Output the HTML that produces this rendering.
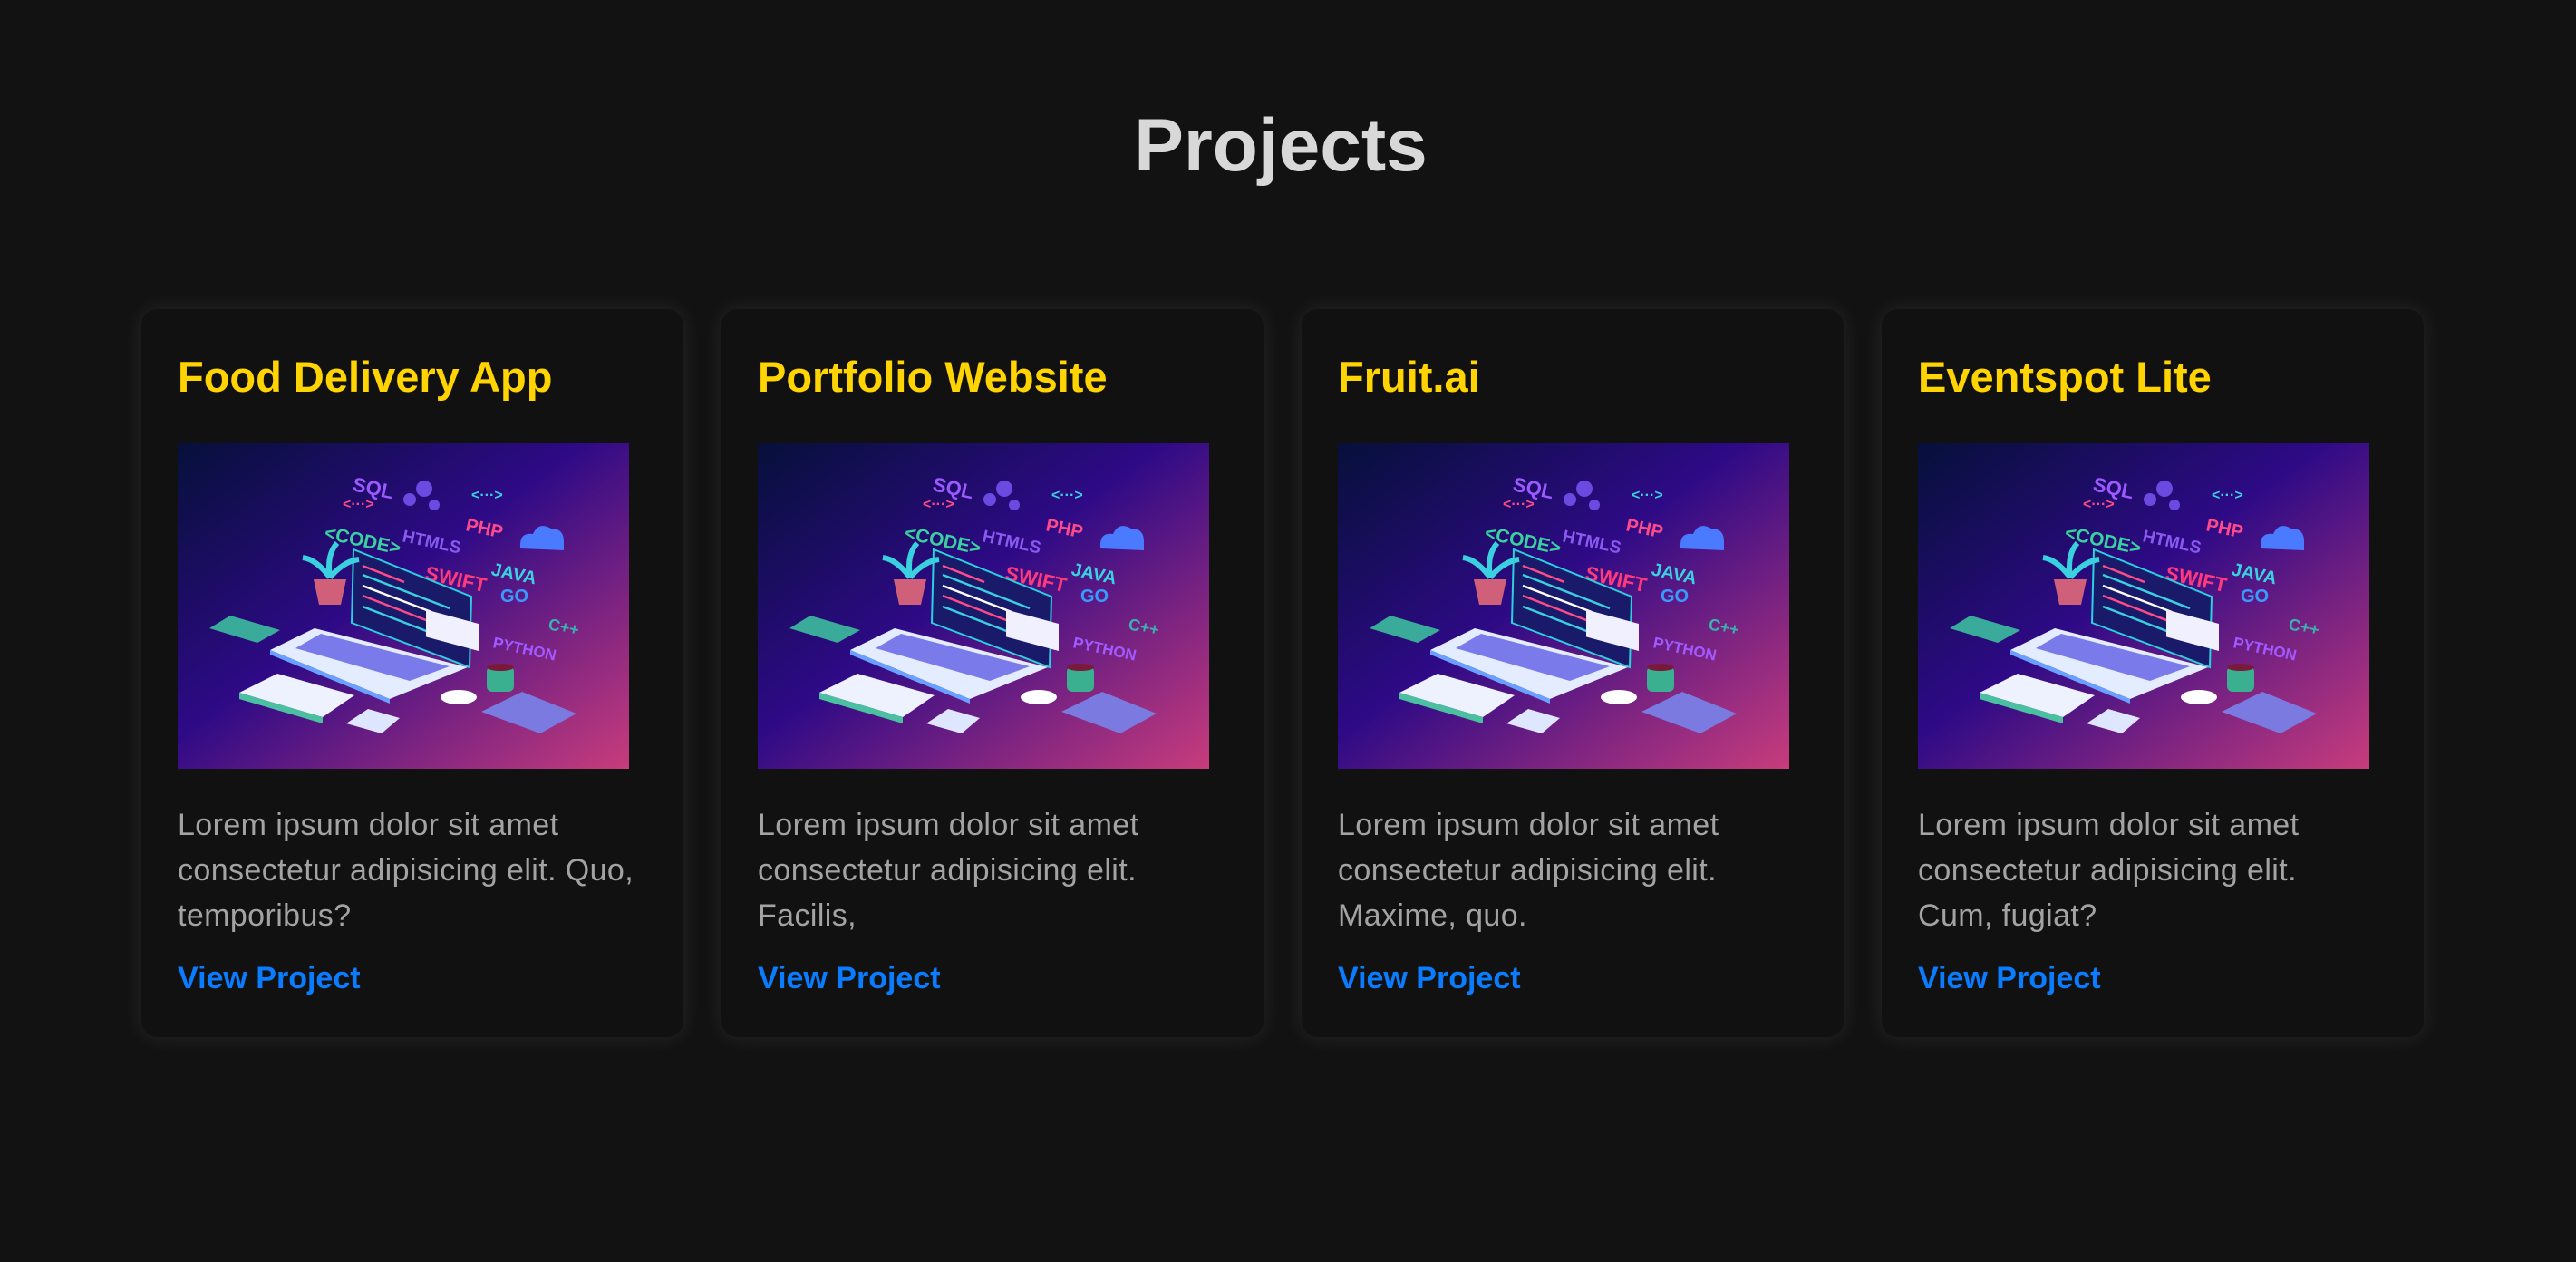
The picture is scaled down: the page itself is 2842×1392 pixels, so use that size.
<!DOCTYPE html>
<html><head><meta charset="utf-8"><style>
*{margin:0;padding:0;box-sizing:border-box}
html,body{width:2842px;height:1392px;background:#121212;overflow:hidden;font-family:"Liberation Sans",sans-serif}
h1{position:absolute;top:120px;left:-8px;width:2842px;text-align:center;font-size:82px;line-height:82px;color:#d8d8d8;font-weight:bold}
.card{position:absolute;top:341px;width:598px;height:803px;background:#111;border-radius:18px;box-shadow:0 0 24px rgba(255,255,255,0.09)}
.t{position:absolute;left:40px;top:48px;font-size:47px;line-height:54px;color:#ffd400;font-weight:bold;white-space:nowrap}
.img{position:absolute;left:40px;top:148px;width:498px;height:359px}
.p{position:absolute;left:40px;top:544px;font-size:34px;line-height:50px;color:#a3a3a3;white-space:nowrap;letter-spacing:0.4px}
.v{position:absolute;left:40px;top:717px;font-size:34px;line-height:42px;color:#0a7cff;font-weight:bold;white-space:nowrap}
</style></head><body>
<h1>Projects</h1>

<div class="card" style="left:156px">
<div class="t">Food Delivery App</div>
<svg class="img" viewBox="0 0 498 359"><defs><linearGradient id="g1" x1="0" y1="0" x2="1" y2="1"><stop offset="0" stop-color="#06103a"/><stop offset="0.45" stop-color="#2e0a86"/><stop offset="1" stop-color="#c83c7c"/></linearGradient></defs>
<rect width="498" height="359" fill="url(#g1)"/>
<g font-family="Liberation Sans" font-weight="bold">
<text x="192" y="52" font-size="22" fill="#9a5aff" transform="rotate(12 192 52)">SQL</text>
<text x="182" y="72" font-size="16" fill="#ff4a8a">&lt;···&gt;</text>
<text x="161" y="105" font-size="21" fill="#3ad0a0" transform="rotate(12 161 105)">&lt;CODE&gt;</text>
<text x="247" y="108" font-size="19" fill="#8a5af0" transform="rotate(12 247 108)">HTMLS</text>
<text x="317" y="96" font-size="20" fill="#ff4a8a" transform="rotate(12 317 96)">PHP</text>
<text x="324" y="62" font-size="16" fill="#3ad0e0">&lt;···&gt;</text>
<text x="272" y="150" font-size="22" fill="#ff3a7a" transform="rotate(12 272 150)">SWIFT</text>
<text x="345" y="145" font-size="20" fill="#3ad0e0" transform="rotate(12 345 145)">JAVA</text>
<text x="356" y="175" font-size="20" fill="#3a9aff">GO</text>
<text x="408" y="205" font-size="18" fill="#3ab0b0" transform="rotate(12 408 205)">C++</text>
<text x="347" y="225" font-size="17" fill="#a05aff" transform="rotate(12 347 225)">PYTHON</text>
</g>
<circle cx="272" cy="50" r="9" fill="#6a4ae0"/><circle cx="256" cy="62" r="7" fill="#6a4ae0"/><circle cx="283" cy="68" r="6" fill="#6a4ae0"/>
<path d="M378 112 q0-14 14-12 q6-14 20-6 q14 0 14 14 l0 10 l-48-2z" fill="#4a7aff"/>
<polygon points="194,117 324,169 322,247 192,198" fill="#1a1a6a" stroke="#2ad0e0" stroke-width="2"/>
<g stroke-width="2.5"><line x1="204" y1="135" x2="250" y2="153" stroke="#ff4a8a"/><line x1="204" y1="145" x2="300" y2="182" stroke="#3ad0e0"/><line x1="204" y1="157" x2="280" y2="186" stroke="#fff"/><line x1="204" y1="168" x2="300" y2="205" stroke="#ff4a8a"/><line x1="204" y1="180" x2="290" y2="213" stroke="#3ad0e0"/></g>
<polygon points="151,204 320,247 234,282 102,228" fill="#e4ecff"/>
<polygon points="158,210 300,246 256,262 130,226" fill="#7a7aea"/>
<polygon points="102,228 234,282 234,287 102,233" fill="#6aa0ff"/>
<rect x="274" y="185" width="58" height="30" fill="#f0f0ff" transform="skewY(15) translate(0,-75)"/>
<path d="M168 148 q-4-25 8-38 M168 148 q-15-20-30-22 M168 148 q15-18 32-20" stroke="#3ad0e0" stroke-width="6" fill="none"/>
<polygon points="150,150 186,150 180,178 156,178" fill="#d0607a"/>
<polygon points="58,190 113,206 88,220 35,204" fill="#3aaa9a"/>
<polygon points="110,254 195,278 160,302 68,275" fill="#eef2ff"/><polygon points="68,275 160,302 160,309 68,282" fill="#4ac0a0"/>
<polygon points="210,293 245,303 225,320 186,309" fill="#dfe6ff"/>
<ellipse cx="310" cy="280" rx="20" ry="8" fill="#fff"/>
<rect x="341" y="246" width="30" height="28" rx="6" fill="#3ab090"/><ellipse cx="356" cy="247" rx="15" ry="4" fill="#7a1a3a"/>
<polygon points="380,274 440,298 400,320 335,296" fill="#7a7ae0"/>
</svg>
<div class="p">Lorem ipsum dolor sit amet<br>consectetur adipisicing elit. Quo,<br>temporibus?</div>
<div class="v">View Project</div>
</div>

<div class="card" style="left:796px">
<div class="t">Portfolio Website</div>
<svg class="img" viewBox="0 0 498 359"><defs><linearGradient id="g2" x1="0" y1="0" x2="1" y2="1"><stop offset="0" stop-color="#06103a"/><stop offset="0.45" stop-color="#2e0a86"/><stop offset="1" stop-color="#c83c7c"/></linearGradient></defs>
<rect width="498" height="359" fill="url(#g2)"/>
<g font-family="Liberation Sans" font-weight="bold">
<text x="192" y="52" font-size="22" fill="#9a5aff" transform="rotate(12 192 52)">SQL</text>
<text x="182" y="72" font-size="16" fill="#ff4a8a">&lt;···&gt;</text>
<text x="161" y="105" font-size="21" fill="#3ad0a0" transform="rotate(12 161 105)">&lt;CODE&gt;</text>
<text x="247" y="108" font-size="19" fill="#8a5af0" transform="rotate(12 247 108)">HTMLS</text>
<text x="317" y="96" font-size="20" fill="#ff4a8a" transform="rotate(12 317 96)">PHP</text>
<text x="324" y="62" font-size="16" fill="#3ad0e0">&lt;···&gt;</text>
<text x="272" y="150" font-size="22" fill="#ff3a7a" transform="rotate(12 272 150)">SWIFT</text>
<text x="345" y="145" font-size="20" fill="#3ad0e0" transform="rotate(12 345 145)">JAVA</text>
<text x="356" y="175" font-size="20" fill="#3a9aff">GO</text>
<text x="408" y="205" font-size="18" fill="#3ab0b0" transform="rotate(12 408 205)">C++</text>
<text x="347" y="225" font-size="17" fill="#a05aff" transform="rotate(12 347 225)">PYTHON</text>
</g>
<circle cx="272" cy="50" r="9" fill="#6a4ae0"/><circle cx="256" cy="62" r="7" fill="#6a4ae0"/><circle cx="283" cy="68" r="6" fill="#6a4ae0"/>
<path d="M378 112 q0-14 14-12 q6-14 20-6 q14 0 14 14 l0 10 l-48-2z" fill="#4a7aff"/>
<polygon points="194,117 324,169 322,247 192,198" fill="#1a1a6a" stroke="#2ad0e0" stroke-width="2"/>
<g stroke-width="2.5"><line x1="204" y1="135" x2="250" y2="153" stroke="#ff4a8a"/><line x1="204" y1="145" x2="300" y2="182" stroke="#3ad0e0"/><line x1="204" y1="157" x2="280" y2="186" stroke="#fff"/><line x1="204" y1="168" x2="300" y2="205" stroke="#ff4a8a"/><line x1="204" y1="180" x2="290" y2="213" stroke="#3ad0e0"/></g>
<polygon points="151,204 320,247 234,282 102,228" fill="#e4ecff"/>
<polygon points="158,210 300,246 256,262 130,226" fill="#7a7aea"/>
<polygon points="102,228 234,282 234,287 102,233" fill="#6aa0ff"/>
<rect x="274" y="185" width="58" height="30" fill="#f0f0ff" transform="skewY(15) translate(0,-75)"/>
<path d="M168 148 q-4-25 8-38 M168 148 q-15-20-30-22 M168 148 q15-18 32-20" stroke="#3ad0e0" stroke-width="6" fill="none"/>
<polygon points="150,150 186,150 180,178 156,178" fill="#d0607a"/>
<polygon points="58,190 113,206 88,220 35,204" fill="#3aaa9a"/>
<polygon points="110,254 195,278 160,302 68,275" fill="#eef2ff"/><polygon points="68,275 160,302 160,309 68,282" fill="#4ac0a0"/>
<polygon points="210,293 245,303 225,320 186,309" fill="#dfe6ff"/>
<ellipse cx="310" cy="280" rx="20" ry="8" fill="#fff"/>
<rect x="341" y="246" width="30" height="28" rx="6" fill="#3ab090"/><ellipse cx="356" cy="247" rx="15" ry="4" fill="#7a1a3a"/>
<polygon points="380,274 440,298 400,320 335,296" fill="#7a7ae0"/>
</svg>
<div class="p">Lorem ipsum dolor sit amet<br>consectetur adipisicing elit.<br>Facilis,</div>
<div class="v">View Project</div>
</div>

<div class="card" style="left:1436px">
<div class="t">Fruit.ai</div>
<svg class="img" viewBox="0 0 498 359"><defs><linearGradient id="g3" x1="0" y1="0" x2="1" y2="1"><stop offset="0" stop-color="#06103a"/><stop offset="0.45" stop-color="#2e0a86"/><stop offset="1" stop-color="#c83c7c"/></linearGradient></defs>
<rect width="498" height="359" fill="url(#g3)"/>
<g font-family="Liberation Sans" font-weight="bold">
<text x="192" y="52" font-size="22" fill="#9a5aff" transform="rotate(12 192 52)">SQL</text>
<text x="182" y="72" font-size="16" fill="#ff4a8a">&lt;···&gt;</text>
<text x="161" y="105" font-size="21" fill="#3ad0a0" transform="rotate(12 161 105)">&lt;CODE&gt;</text>
<text x="247" y="108" font-size="19" fill="#8a5af0" transform="rotate(12 247 108)">HTMLS</text>
<text x="317" y="96" font-size="20" fill="#ff4a8a" transform="rotate(12 317 96)">PHP</text>
<text x="324" y="62" font-size="16" fill="#3ad0e0">&lt;···&gt;</text>
<text x="272" y="150" font-size="22" fill="#ff3a7a" transform="rotate(12 272 150)">SWIFT</text>
<text x="345" y="145" font-size="20" fill="#3ad0e0" transform="rotate(12 345 145)">JAVA</text>
<text x="356" y="175" font-size="20" fill="#3a9aff">GO</text>
<text x="408" y="205" font-size="18" fill="#3ab0b0" transform="rotate(12 408 205)">C++</text>
<text x="347" y="225" font-size="17" fill="#a05aff" transform="rotate(12 347 225)">PYTHON</text>
</g>
<circle cx="272" cy="50" r="9" fill="#6a4ae0"/><circle cx="256" cy="62" r="7" fill="#6a4ae0"/><circle cx="283" cy="68" r="6" fill="#6a4ae0"/>
<path d="M378 112 q0-14 14-12 q6-14 20-6 q14 0 14 14 l0 10 l-48-2z" fill="#4a7aff"/>
<polygon points="194,117 324,169 322,247 192,198" fill="#1a1a6a" stroke="#2ad0e0" stroke-width="2"/>
<g stroke-width="2.5"><line x1="204" y1="135" x2="250" y2="153" stroke="#ff4a8a"/><line x1="204" y1="145" x2="300" y2="182" stroke="#3ad0e0"/><line x1="204" y1="157" x2="280" y2="186" stroke="#fff"/><line x1="204" y1="168" x2="300" y2="205" stroke="#ff4a8a"/><line x1="204" y1="180" x2="290" y2="213" stroke="#3ad0e0"/></g>
<polygon points="151,204 320,247 234,282 102,228" fill="#e4ecff"/>
<polygon points="158,210 300,246 256,262 130,226" fill="#7a7aea"/>
<polygon points="102,228 234,282 234,287 102,233" fill="#6aa0ff"/>
<rect x="274" y="185" width="58" height="30" fill="#f0f0ff" transform="skewY(15) translate(0,-75)"/>
<path d="M168 148 q-4-25 8-38 M168 148 q-15-20-30-22 M168 148 q15-18 32-20" stroke="#3ad0e0" stroke-width="6" fill="none"/>
<polygon points="150,150 186,150 180,178 156,178" fill="#d0607a"/>
<polygon points="58,190 113,206 88,220 35,204" fill="#3aaa9a"/>
<polygon points="110,254 195,278 160,302 68,275" fill="#eef2ff"/><polygon points="68,275 160,302 160,309 68,282" fill="#4ac0a0"/>
<polygon points="210,293 245,303 225,320 186,309" fill="#dfe6ff"/>
<ellipse cx="310" cy="280" rx="20" ry="8" fill="#fff"/>
<rect x="341" y="246" width="30" height="28" rx="6" fill="#3ab090"/><ellipse cx="356" cy="247" rx="15" ry="4" fill="#7a1a3a"/>
<polygon points="380,274 440,298 400,320 335,296" fill="#7a7ae0"/>
</svg>
<div class="p">Lorem ipsum dolor sit amet<br>consectetur adipisicing elit.<br>Maxime, quo.</div>
<div class="v">View Project</div>
</div>

<div class="card" style="left:2076px">
<div class="t">Eventspot Lite</div>
<svg class="img" viewBox="0 0 498 359"><defs><linearGradient id="g4" x1="0" y1="0" x2="1" y2="1"><stop offset="0" stop-color="#06103a"/><stop offset="0.45" stop-color="#2e0a86"/><stop offset="1" stop-color="#c83c7c"/></linearGradient></defs>
<rect width="498" height="359" fill="url(#g4)"/>
<g font-family="Liberation Sans" font-weight="bold">
<text x="192" y="52" font-size="22" fill="#9a5aff" transform="rotate(12 192 52)">SQL</text>
<text x="182" y="72" font-size="16" fill="#ff4a8a">&lt;···&gt;</text>
<text x="161" y="105" font-size="21" fill="#3ad0a0" transform="rotate(12 161 105)">&lt;CODE&gt;</text>
<text x="247" y="108" font-size="19" fill="#8a5af0" transform="rotate(12 247 108)">HTMLS</text>
<text x="317" y="96" font-size="20" fill="#ff4a8a" transform="rotate(12 317 96)">PHP</text>
<text x="324" y="62" font-size="16" fill="#3ad0e0">&lt;···&gt;</text>
<text x="272" y="150" font-size="22" fill="#ff3a7a" transform="rotate(12 272 150)">SWIFT</text>
<text x="345" y="145" font-size="20" fill="#3ad0e0" transform="rotate(12 345 145)">JAVA</text>
<text x="356" y="175" font-size="20" fill="#3a9aff">GO</text>
<text x="408" y="205" font-size="18" fill="#3ab0b0" transform="rotate(12 408 205)">C++</text>
<text x="347" y="225" font-size="17" fill="#a05aff" transform="rotate(12 347 225)">PYTHON</text>
</g>
<circle cx="272" cy="50" r="9" fill="#6a4ae0"/><circle cx="256" cy="62" r="7" fill="#6a4ae0"/><circle cx="283" cy="68" r="6" fill="#6a4ae0"/>
<path d="M378 112 q0-14 14-12 q6-14 20-6 q14 0 14 14 l0 10 l-48-2z" fill="#4a7aff"/>
<polygon points="194,117 324,169 322,247 192,198" fill="#1a1a6a" stroke="#2ad0e0" stroke-width="2"/>
<g stroke-width="2.5"><line x1="204" y1="135" x2="250" y2="153" stroke="#ff4a8a"/><line x1="204" y1="145" x2="300" y2="182" stroke="#3ad0e0"/><line x1="204" y1="157" x2="280" y2="186" stroke="#fff"/><line x1="204" y1="168" x2="300" y2="205" stroke="#ff4a8a"/><line x1="204" y1="180" x2="290" y2="213" stroke="#3ad0e0"/></g>
<polygon points="151,204 320,247 234,282 102,228" fill="#e4ecff"/>
<polygon points="158,210 300,246 256,262 130,226" fill="#7a7aea"/>
<polygon points="102,228 234,282 234,287 102,233" fill="#6aa0ff"/>
<rect x="274" y="185" width="58" height="30" fill="#f0f0ff" transform="skewY(15) translate(0,-75)"/>
<path d="M168 148 q-4-25 8-38 M168 148 q-15-20-30-22 M168 148 q15-18 32-20" stroke="#3ad0e0" stroke-width="6" fill="none"/>
<polygon points="150,150 186,150 180,178 156,178" fill="#d0607a"/>
<polygon points="58,190 113,206 88,220 35,204" fill="#3aaa9a"/>
<polygon points="110,254 195,278 160,302 68,275" fill="#eef2ff"/><polygon points="68,275 160,302 160,309 68,282" fill="#4ac0a0"/>
<polygon points="210,293 245,303 225,320 186,309" fill="#dfe6ff"/>
<ellipse cx="310" cy="280" rx="20" ry="8" fill="#fff"/>
<rect x="341" y="246" width="30" height="28" rx="6" fill="#3ab090"/><ellipse cx="356" cy="247" rx="15" ry="4" fill="#7a1a3a"/>
<polygon points="380,274 440,298 400,320 335,296" fill="#7a7ae0"/>
</svg>
<div class="p">Lorem ipsum dolor sit amet<br>consectetur adipisicing elit.<br>Cum, fugiat?</div>
<div class="v">View Project</div>
</div>
</body></html>
